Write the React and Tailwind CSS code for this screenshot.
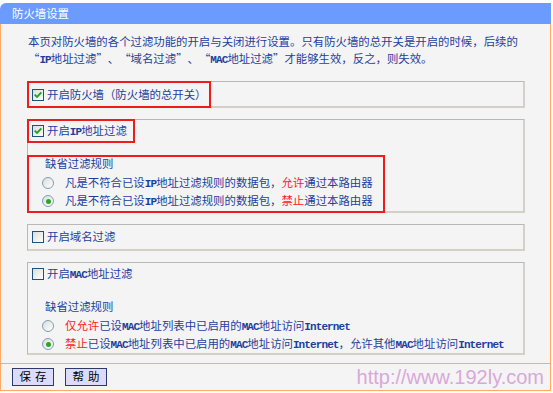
import React from 'react';

const blue = 'text-[#1e3f9e]';

function L({ children }) {
    return <span className="font-['Liberation_Mono',monospace] text-[11px] tracking-[-0.9px] font-bold">{children}</span>;
}

// full-width curly quotes
function Q({ close }) {
    return <span className={`inline-block w-[11.4px] ${close ? 'text-left' : 'text-right'}`}>{close ? '”' : '“'}</span>;
}

function Check({ checked }) {
    return (
        <span className="w-[12px] h-[12px] shrink-0 border border-[#1c5180] bg-gradient-to-br from-[#dcdcd7] to-white flex items-center justify-center">
            {checked && (
                <svg viewBox="0 0 12 12" className="w-[10px] h-[10px]">
                    <path d="M2 5.5 L4.8 8.3 L10 2.8" stroke="#21a121" strokeWidth="2.2" fill="none" />
                </svg>
            )}
        </span>
    );
}

function Radio({ checked }) {
    return (
        <span className="w-[12px] h-[12px] shrink-0 rounded-full border border-[#7f9db9] bg-gradient-to-br from-[#dcdcd8] to-white flex items-center justify-center">
            {checked && <span className="w-[5px] h-[5px] rounded-full bg-[#2aa52a]" />}
        </span>
    );
}

function Box({ className = '', children }) {
    return (
        <div className={`ml-[26px] w-[498px] border-t border-l border-[#b8b8b8] border-r-2 border-b-2 border-r-[#d4d0c8] border-b-[#d4d0c8] ${className}`}>
            {children}
        </div>
    );
}

export default function App() {
    return (
        <div className="w-[553px] h-[393px] bg-white pt-[3px] font-['Noto_Sans_CJK_SC',sans-serif] text-[11.4px]">
            {/* title bar */}
            <div className="w-[551px] h-[21px] bg-[#6b9bff] rounded-tl-[6px] flex items-center pl-[12px] text-white">
                防火墙设置
            </div>

            <div className="w-[551px] border-l border-r border-[#ffaa66] bg-[#f4f4f4]">
                <div className="h-[339px]">
                    <div className={`pt-[9px] pl-[27px] leading-[17px] ${blue}`}>
                        <div>本页对防火墙的各个过滤功能的开启与关闭进行设置。只有防火墙的总开关是开启的时候，后续的</div>
                        <div><Q /><L>IP</L>地址过滤<Q close />、<Q />域名过滤<Q close />、<Q /><L>MAC</L>地址过滤<Q close />才能够生效，反之，则失效。</div>
                    </div>

                    {/* master switch */}
                    <Box className="mt-[12px] h-[27px]">
                        <div className={`-mt-px -ml-px h-[27px] w-[184px] border-2 border-[#f01c1c] flex items-center gap-[3px] pl-[3px] ${blue}`}>
                            <Check checked />
                            <span>开启防火墙（防火墙的总开关）</span>
                        </div>
                    </Box>

                    {/* IP filter */}
                    <Box className="mt-[11px] h-[94px]">
                        <div className={`-mt-px -ml-px h-[24px] w-[108px] border-2 border-[#f01c1c] flex items-center gap-[3px] pl-[3px] ${blue}`}>
                            <Check checked />
                            <span>开启<L>IP</L>地址过滤</span>
                        </div>
                        <div className={`mt-[12px] -ml-px h-[58px] w-[358px] border-2 border-[#f01c1c] ${blue}`}>
                            <div className="h-[12px] leading-[12px] pl-[16px]">缺省过滤规则</div>
                            <div className="mt-[5px] h-[18px] flex items-center pl-[13px] gap-[11px]">
                                <Radio />
                                <span>凡是不符合已设<L>IP</L>地址过滤规则的数据包，<span className="text-[#ff2020]">允许</span>通过本路由器</span>
                            </div>
                            <div className="h-[18px] flex items-center pl-[13px] gap-[11px]">
                                <Radio checked />
                                <span>凡是不符合已设<L>IP</L>地址过滤规则的数据包，<span className="text-[#ff2020]">禁止</span>通过本路由器</span>
                            </div>
                        </div>
                    </Box>

                    {/* domain filter */}
                    <Box className="mt-[11px] h-[27px]">
                        <div className={`h-[24px] flex items-center gap-[3px] pl-[4px] ${blue}`}>
                            <Check />
                            <span>开启域名过滤</span>
                        </div>
                    </Box>

                    {/* MAC filter */}
                    <Box className={`mt-[11px] h-[93px] ${blue}`}>
                        <div className="h-[22px] flex items-center gap-[3px] pl-[4px]">
                            <Check />
                            <span>开启<L>MAC</L>地址过滤</span>
                        </div>
                        <div className="mt-[15px] h-[12px] leading-[12px] pl-[17px]">缺省过滤规则</div>
                        <div className="mt-[5px] h-[18px] flex items-center pl-[14px] gap-[11px]">
                            <Radio />
                            <span><span className="text-[#ff2020]">仅允许</span>已设<L>MAC</L>地址列表中已启用的<L>MAC</L>地址访问<L>Internet</L></span>
                        </div>
                        <div className="h-[18px] flex items-center pl-[14px] gap-[11px]">
                            <Radio checked />
                            <span><span className="text-[#ff2020]">禁止</span>已设<L>MAC</L>地址列表中已启用的<L>MAC</L>地址访问<L>Internet</L>，允许其他<L>MAC</L>地址访问<L>Internet</L></span>
                        </div>
                    </Box>
                </div>

                {/* footer */}
                <div className="h-[28px] border-t border-b border-[#ffaa66] flex items-center justify-between pl-[11px] pr-[6px]">
                    <div className="flex gap-[11px]">
                        <button className="w-[42px] h-[18px] border border-[#2b3a6b] bg-[#dcdcfa] text-black text-[11.4px] leading-none tracking-[4px] pl-[4px]">保存</button>
                        <button className="w-[42px] h-[18px] border border-[#2b3a6b] bg-[#dcdcfa] text-black text-[11.4px] leading-none tracking-[4px] pl-[4px]">帮助</button>
                    </div>
                    <span className="font-['Liberation_Sans',sans-serif] text-[20px] leading-none text-[#d9a8d9]">http://www.192ly.com</span>
                </div>
            </div>
        </div>
    );
}
